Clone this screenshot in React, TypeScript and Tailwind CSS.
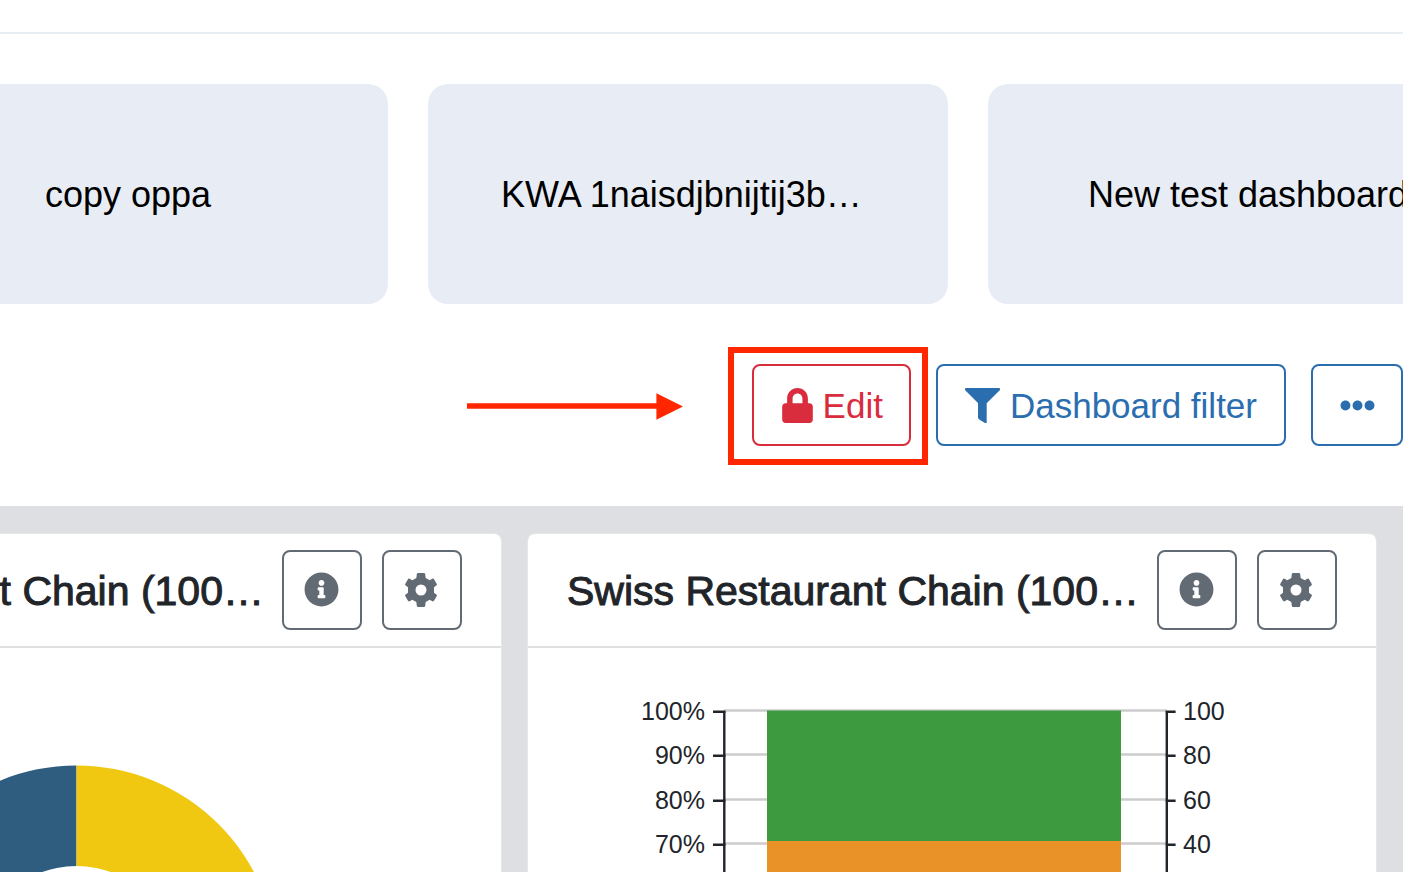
import type { ReactNode } from "react";
import { FaEllipsisH, FaInfoCircle, FaLock } from "react-icons/fa";

const dashboards = [
	{ name: "copy oppa", truncated: false },
	{ name: "KWA 1naisdjbnijtij3b…", truncated: true },
	{ name: "New test dashboard", truncated: false },
];

const ticks = [
	{ y: 63, left: "100%", right: "100" },
	{ y: 107, left: "90%", right: "80" },
	{ y: 152, left: "80%", right: "60" },
	{ y: 196, left: "70%", right: "40" },
];

function FilterIcon() {
	return (
		<svg
			width="35"
			height="35"
			viewBox="0 0 35 35"
			fill="currentColor"
			aria-hidden="true"
		>
			<path d="M1 0H34Q35 0 35 1V2L21.7 15.3V35H20L14.6 31.8Q13 30.8 13 29.5V14.9L0 2V1Q0 0 1 0Z" />
		</svg>
	);
}

function GearIcon() {
	return (
		<svg
			width="32"
			height="34"
			viewBox="0 0 96 102"
			fill="currentColor"
			aria-hidden="true"
		>
			<path
				fillRule="evenodd"
				d="M39 0H57Q60 0 60.500 3L62 15L74 22L82 17Q86 16 88 20L95 32Q97 36 93 38L87 43V59L93 64Q97 66 95 70L88 82Q86 86 82 85L74 80L62 87L60.500 99Q60 102 57 102H39Q36 102 35.500 99L34 87L22 80L14 85Q10 86 8 82L1 70Q-1 66 3 64L9 59V43L3 38Q-1 36 1 32L8 20Q10 16 14 17L22 22L34 15L35.500 3Q36 0 39 0ZM48 34.500A16.500 16.500 0 1 0 48 67.500A16.500 16.500 0 1 0 48 34.500Z"
			/>
		</svg>
	);
}

function DashboardTabs() {
	return (
		<nav className="-ml-[132px] flex gap-10 pt-[50px]">
			{dashboards.map(({ name, truncated }) => (
				<button
					key={name}
					type="button"
					className={`h-[220px] w-[520px] shrink-0 rounded-[20px] bg-[#e8edf5] px-[73px] pt-0.5 text-[36px] leading-[44px] whitespace-nowrap text-black ${
						truncated ? "text-left" : "text-center"
					}`}
				>
					{name}
				</button>
			))}
		</nav>
	);
}

function Toolbar() {
	return (
		<div className="flex items-center justify-end gap-[25px] py-[60px] text-[35px] leading-[42px]">
			<svg
				width="216"
				height="30"
				viewBox="0 0 216 30"
				fill="#ff2600"
				className="mr-11 shrink-0"
				aria-hidden="true"
			>
				<path d="M0 13.3H189.4V3.3L216 16.6L189.4 29.7V18.8H0Z" />
			</svg>
			<div className="relative shrink-0">
				<button
					type="button"
					className="flex h-[82px] items-center gap-2 rounded-lg border-2 border-[#d92d3d] px-[26px] text-[#d92d3d]"
				>
					<FaLock />
					<span className="pt-0.5">Edit</span>
				</button>
				<div className="pointer-events-none absolute -top-[17px] -right-[17px] -bottom-[19px] -left-6 border-[6px] border-[#ff2600]" />
			</div>
			<button
				type="button"
				className="flex h-[82px] shrink-0 items-center gap-[10px] rounded-lg border-2 border-[#2b6eb0] px-[27px] whitespace-nowrap text-[#2b6eb0]"
			>
				<FilterIcon />
				<span className="pt-0.5">Dashboard filter</span>
			</button>
			<button
				type="button"
				aria-label="More"
				className="flex h-[82px] w-[92px] shrink-0 items-center justify-center rounded-lg border-2 border-[#2b6eb0] text-[#2b6eb0]"
			>
				<FaEllipsisH />
			</button>
		</div>
	);
}

function IconButton({
	label,
	children,
}: {
	label: string;
	children: ReactNode;
}) {
	return (
		<button
			type="button"
			aria-label={label}
			className="flex size-20 shrink-0 items-center justify-center rounded-lg border-2 border-[#626b74] pr-0.5 pb-px text-[35px] text-[#626b74]"
		>
			{children}
		</button>
	);
}

function Widget({ title, children }: { title: string; children: ReactNode }) {
	return (
		<section className="min-w-0 rounded-t-lg border border-b-0 border-[#e5e6e7] bg-white">
			<header className="flex items-center gap-5 border-b-2 border-[#dfe0e1] px-[39px] py-4">
				<h2 className="min-w-0 flex-1 pt-0.5 text-[41px] leading-[48px] font-normal whitespace-nowrap text-[#212529] [-webkit-text-stroke:1px_#212529]">
					{title}
				</h2>
				<IconButton label="Information">
					<FaInfoCircle />
				</IconButton>
				<IconButton label="Settings">
					<GearIcon />
				</IconButton>
			</header>
			{children}
		</section>
	);
}

function DonutChart() {
	return (
		<svg
			width="404"
			height="224"
			viewBox="0 0 404 224"
			className="mx-auto block"
			role="img"
			aria-label="Donut chart"
		>
			<path
				d="M201.5 117.5A201 201 0 0 0 201.5 519.5V419A100.5 100.5 0 0 1 201.5 218Z"
				fill="#2f5d80"
			/>
			<path
				d="M201.5 117.5A201 201 0 0 1 201.5 519.5V419A100.5 100.5 0 0 0 201.5 218Z"
				fill="#f0c711"
			/>
		</svg>
	);
}

function StackedBarChart() {
	return (
		<svg
			width="640"
			height="224"
			viewBox="0 0 640 224"
			className="mx-auto block"
			fontSize="25"
			fill="#212529"
			role="img"
			aria-label="Stacked bar chart"
		>
			{ticks.map(({ y }) => (
				<path
					key={y}
					d={`M92 ${y - 0.5}H535`}
					stroke="#cccccc"
					strokeWidth="2.4"
				/>
			))}
			<rect x="135" y="62.5" width="354" height="130.5" fill="#3e9a3f" />
			<rect x="135" y="193" width="354" height="31" fill="#e99227" />
			<path
				d="M92.3 63V224M534.8 63V224"
				stroke="#212529"
				strokeWidth="2.4"
			/>
			{ticks.map(({ y, left, right }) => (
				<g key={y}>
					<path
						d={`M81 ${y + 0.8}H93.4M533.8 ${y + 0.8}H543.6`}
						stroke="#212529"
						strokeWidth="2.4"
					/>
					<text x="73" y={y + 9} textAnchor="end">
						{left}
					</text>
					<text x="551" y={y + 9}>
						{right}
					</text>
				</g>
			))}
		</svg>
	);
}

export default function App() {
	return (
		<div className="flex min-h-screen flex-col overflow-hidden bg-white pr-[14px] font-['Liberation_Sans',Arial,sans-serif]">
			<main className="flex flex-1 flex-col overflow-hidden">
				<div className="h-[34px] shrink-0 border-b-2 border-[#e8edf2]" />
				<DashboardTabs />
				<Toolbar />
				<div className="flex flex-1 bg-[#dddfe3] pt-[27px] pr-[26px]">
					<div className="-ml-[348px] grid flex-1 grid-cols-2 gap-[25px]">
						<Widget title="Swiss Restaurant Chain (100…">
							<DonutChart />
						</Widget>
						<Widget title="Swiss Restaurant Chain (100…">
							<StackedBarChart />
						</Widget>
					</div>
				</div>
			</main>
		</div>
	);
}
